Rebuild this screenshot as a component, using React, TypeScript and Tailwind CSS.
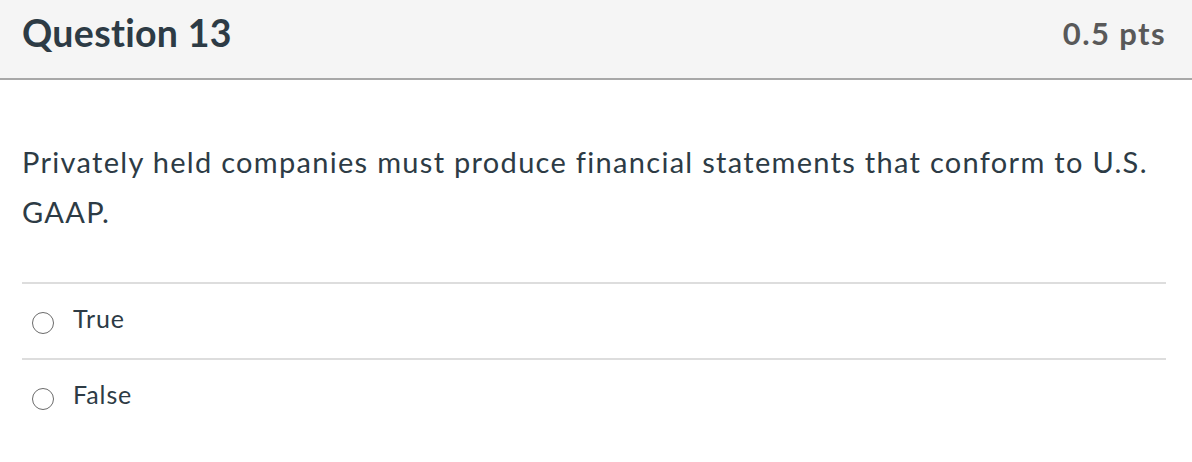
export default function App() {
  const answers = ['True', 'False'];

  return (
    <div className="min-h-screen bg-white text-[#2d3b45]" style={{ fontFamily: 'Lato, "Open Sans", sans-serif' }}>
      {/* Header */}
      <div className="h-[80px] bg-[#f5f5f5] border-b-2 border-[#a8a8a8] flex items-center justify-between pl-[22px] pr-[26px]">
        <h2 className="text-[37.5px] font-bold leading-none mt-[-12px] tracking-[0.3px]">Question 13</h2>
        <div className="text-[31px] font-bold leading-none text-[#595959] mt-[-12px] tracking-[1.4px]">0.5 pts</div>
      </div>

      {/* Body */}
      <div className="pl-[22px] pr-[26px]">
        <p className="text-[29px] leading-[50px] mt-[57px] mb-[45px] tracking-[1.3px]">
          Privately held companies must produce financial statements that conform to U.S. GAAP.
        </p>

        <div>
          {answers.map((a) => (
            <div key={a} className="h-[76px] border-t-2 border-[#dddddd] flex items-center pl-[10px]">
              <span className="w-[22px] h-[22px] rounded-full border-[1.5px] border-[#6b6b6b] mt-[4px]" />
              <span className="ml-[19px] text-[25px] leading-none mt-[-5px] tracking-[0.9px]">{a}</span>
            </div>
          ))}
        </div>
      </div>
    </div>
  );
}
